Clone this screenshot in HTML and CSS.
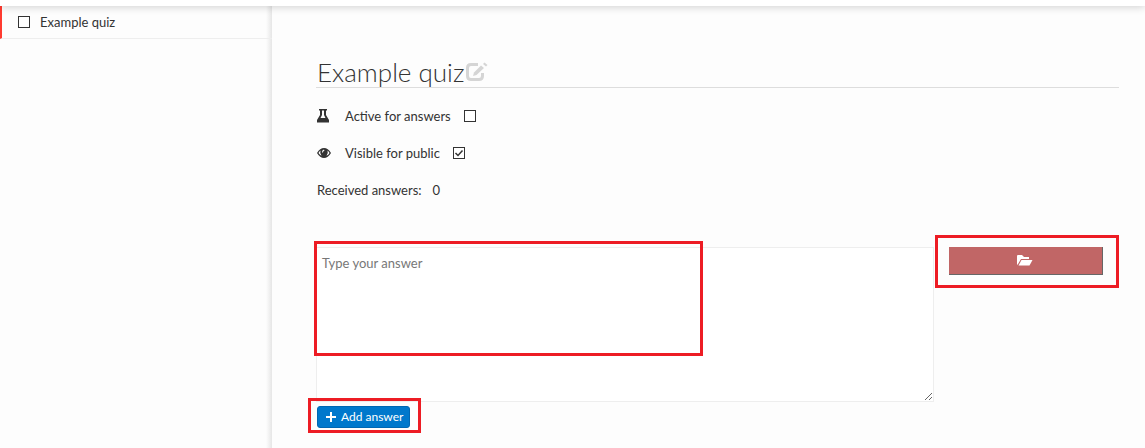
FILE: index.html
```
<!DOCTYPE html>
<html lang="en">

<head>
    <meta charset="UTF-8">
    <title>Example quiz</title>
    <link rel="stylesheet" href="styles.css">
</head>

<body>
    <header class="topbar"></header>
    <div class="page">
        <nav class="sidebar">
            <div class="quiz-item">
                <input type="checkbox" class="check" id="quiz-select">
                <label for="quiz-select">Example quiz</label>
            </div>
        </nav>

        <main class="content">
            <div class="title">
                <h1>Example quiz</h1>
                <a href="#" class="edit" aria-label="Edit">
                    <svg width="22" height="20" viewBox="0 0 22 20">
                        <path d="M12 2.500H5Q1.500 2.500 1.500 6V14Q1.500 17.500 5 17.500H13Q16.500 17.500 16.500 14V11" fill="none" stroke="currentColor" stroke-width="3"/>
                        <path d="M7 14L8 10.500L15 3.500L18 6L10.500 13Z" fill="currentColor"/>
                        <path d="M17 2L18.500 0.500L21.500 3L20 4.500Z" fill="currentColor"/>
                    </svg>
                </a>
            </div>

            <div class="option">
                <svg class="icon" width="14" height="14" viewBox="0 0 14 14">
                    <path d="M2 0H10V1.500H9V6L12 11V13.500H0V11L3 6V1.500H2ZM5 1.500V6L3.500 9H8.500L7 6V1.500Z" fill="currentColor" fill-rule="evenodd"/>
                </svg>
                <label for="active">Active for answers</label>
                <input type="checkbox" class="check" id="active">
            </div>
            <div class="option">
                <svg class="icon" width="14" height="14" viewBox="0 0 14 14">
                    <path d="M0 7Q3 2 7 2T14 7Q11 12 7 12T0 7ZM3.500 4.500Q2 5.500 1.500 7Q3 9 4.500 9.800Q2.500 7 3.500 4.500ZM10.500 4.500Q11.500 7 9.500 9.800Q11.500 9 12.500 7Q12 5.500 10.500 4.500ZM7 3.500Q4.800 4 5 6.500L6 6.500Q6 5 7.500 4.500Z" fill="currentColor" fill-rule="evenodd"/>
                </svg>
                <label for="visible">Visible for public</label>
                <input type="checkbox" class="check" id="visible" checked>
            </div>
            <div class="option">
                <span>Received answers:</span>
                <span class="count">0</span>
            </div>

            <form class="answer">
                <div class="marked marked-text">
                    <textarea class="answer-text" aria-label="Answer" placeholder="Type your answer"></textarea>
                </div>
                <div class="marked marked-file">
                    <button type="button" class="file-btn" aria-label="Choose file">
                        <svg width="16" height="12" viewBox="0 0 16 12">
                            <path d="M0 10V1Q0 0 1 0H5L7 2H12V4H4L1 9Z" fill="currentColor"/>
                            <path d="M4.500 5H15.500L12.500 10.500H1.500Z" fill="currentColor"/>
                        </svg>
                    </button>
                </div>
                <div class="marked marked-add">
                    <button type="button" class="add-btn">
                        <svg width="10" height="10" viewBox="0 0 10 10">
                            <path d="M5 0V10M0 5H10" stroke="currentColor" stroke-width="2"/>
                        </svg>
                        Add answer
                    </button>
                </div>
            </form>
        </main>
    </div>
</body>

</html>
```
FILE: styles.css
```
*,
*::after {
    box-sizing: border-box;
}
body {
    display: flex;
    flex-direction: column;
    min-height: 100vh;
    margin: 0;
    font-family: Lato, "Open Sans", sans-serif;
    font-size: 13px;
    line-height: 20px;
    color: #333;
    background: #fdfdfd;
}
.topbar {
    z-index: 1;
    height: 6px;
    background: #fff;
    box-shadow: 0 0 8px rgba(0, 0, 0, 0.25);
}
.page {
    display: flex;
    flex: 1;
}
.sidebar {
    flex: 0 0 272px;
    background: linear-gradient(to left, #e6e6e6, #fdfdfd 6px);
}
.quiz-item {
    display: flex;
    align-items: center;
    gap: 10px;
    height: 33px;
    padding-left: 16px;
    border-left: 2px solid #ff3b30;
    border-bottom: 1px solid #eee;
}
.check {
    appearance: none;
    width: 12px;
    height: 12px;
    margin: 0;
    border: 1px solid #333;
    background: #fff;
}
.check:checked {
    background: #fff url("data:image/svg+xml,%3Csvg xmlns='http://www.w3.org/2000/svg' viewBox='0 0 10 10'%3E%3Cpath d='M1.500 5L4 7.500L8.500 2.500' fill='none' stroke='%23333' stroke-width='1.500'/%3E%3C/svg%3E") center / 10px no-repeat;
}
.content {
    flex: 1;
    padding: 50px 26px 0 44px;
}
.title {
    display: flex;
    align-items: center;
    gap: 2px;
    height: 32px;
    margin-bottom: 18px;
    padding-left: 1px;
    border-bottom: 1px solid #ddd;
}
.title h1 {
    margin: 0;
    font-size: 26px;
    font-weight: 300;
    line-height: 32px;
}
.edit {
    display: flex;
    color: #d5d5d5;
}
.option {
    display: flex;
    align-items: center;
    height: 20px;
    margin-bottom: 17px;
    padding-left: 1px;
}
.icon {
    margin-right: 14px;
}
.option .check {
    margin-left: 13px;
}
.count {
    margin-left: 11px;
}
.answer {
    display: grid;
    grid-template-columns: 4fr 1fr;
    gap: 4px 15px;
    align-items: start;
    padding-right: 16px;
    margin-top: 47px;
}
.marked {
    position: relative;
}
/* red callout frames over the form controls */
.marked::after {
    content: "";
    position: absolute;
    border: 3px solid #ed1c24;
    pointer-events: none;
}
.marked-text::after {
    top: -6px;
    left: -2px;
    width: 63%;
    height: 115px;
}
.marked-file::after {
    inset: -12px -16px -13px -14px;
}
.marked-add::after {
    inset: -8px -11px -5px -9px;
}
.answer-text {
    display: block;
    width: 100%;
    height: 155px;
    padding: 5px;
    border: 1px solid #eee;
    font: inherit;
    color: #333;
    background: #fff;
    outline: none;
}
.answer-text::placeholder {
    color: #777;
}
.file-btn {
    display: flex;
    align-items: center;
    justify-content: center;
    width: 100%;
    height: 28px;
    border: 0;
    border-right: 1px solid #666;
    border-bottom: 1px solid #666;
    color: #fff;
    background: #c16666;
}
.marked-add {
    justify-self: start;
    margin-left: 1px;
}
.add-btn {
    display: flex;
    align-items: center;
    gap: 5px;
    height: 22px;
    padding: 0 6px 0 8px;
    border: 1px solid #0067b3;
    border-radius: 3px;
    font: inherit;
    font-size: 12px;
    color: #fff;
    background: #0078cc;
}
```
